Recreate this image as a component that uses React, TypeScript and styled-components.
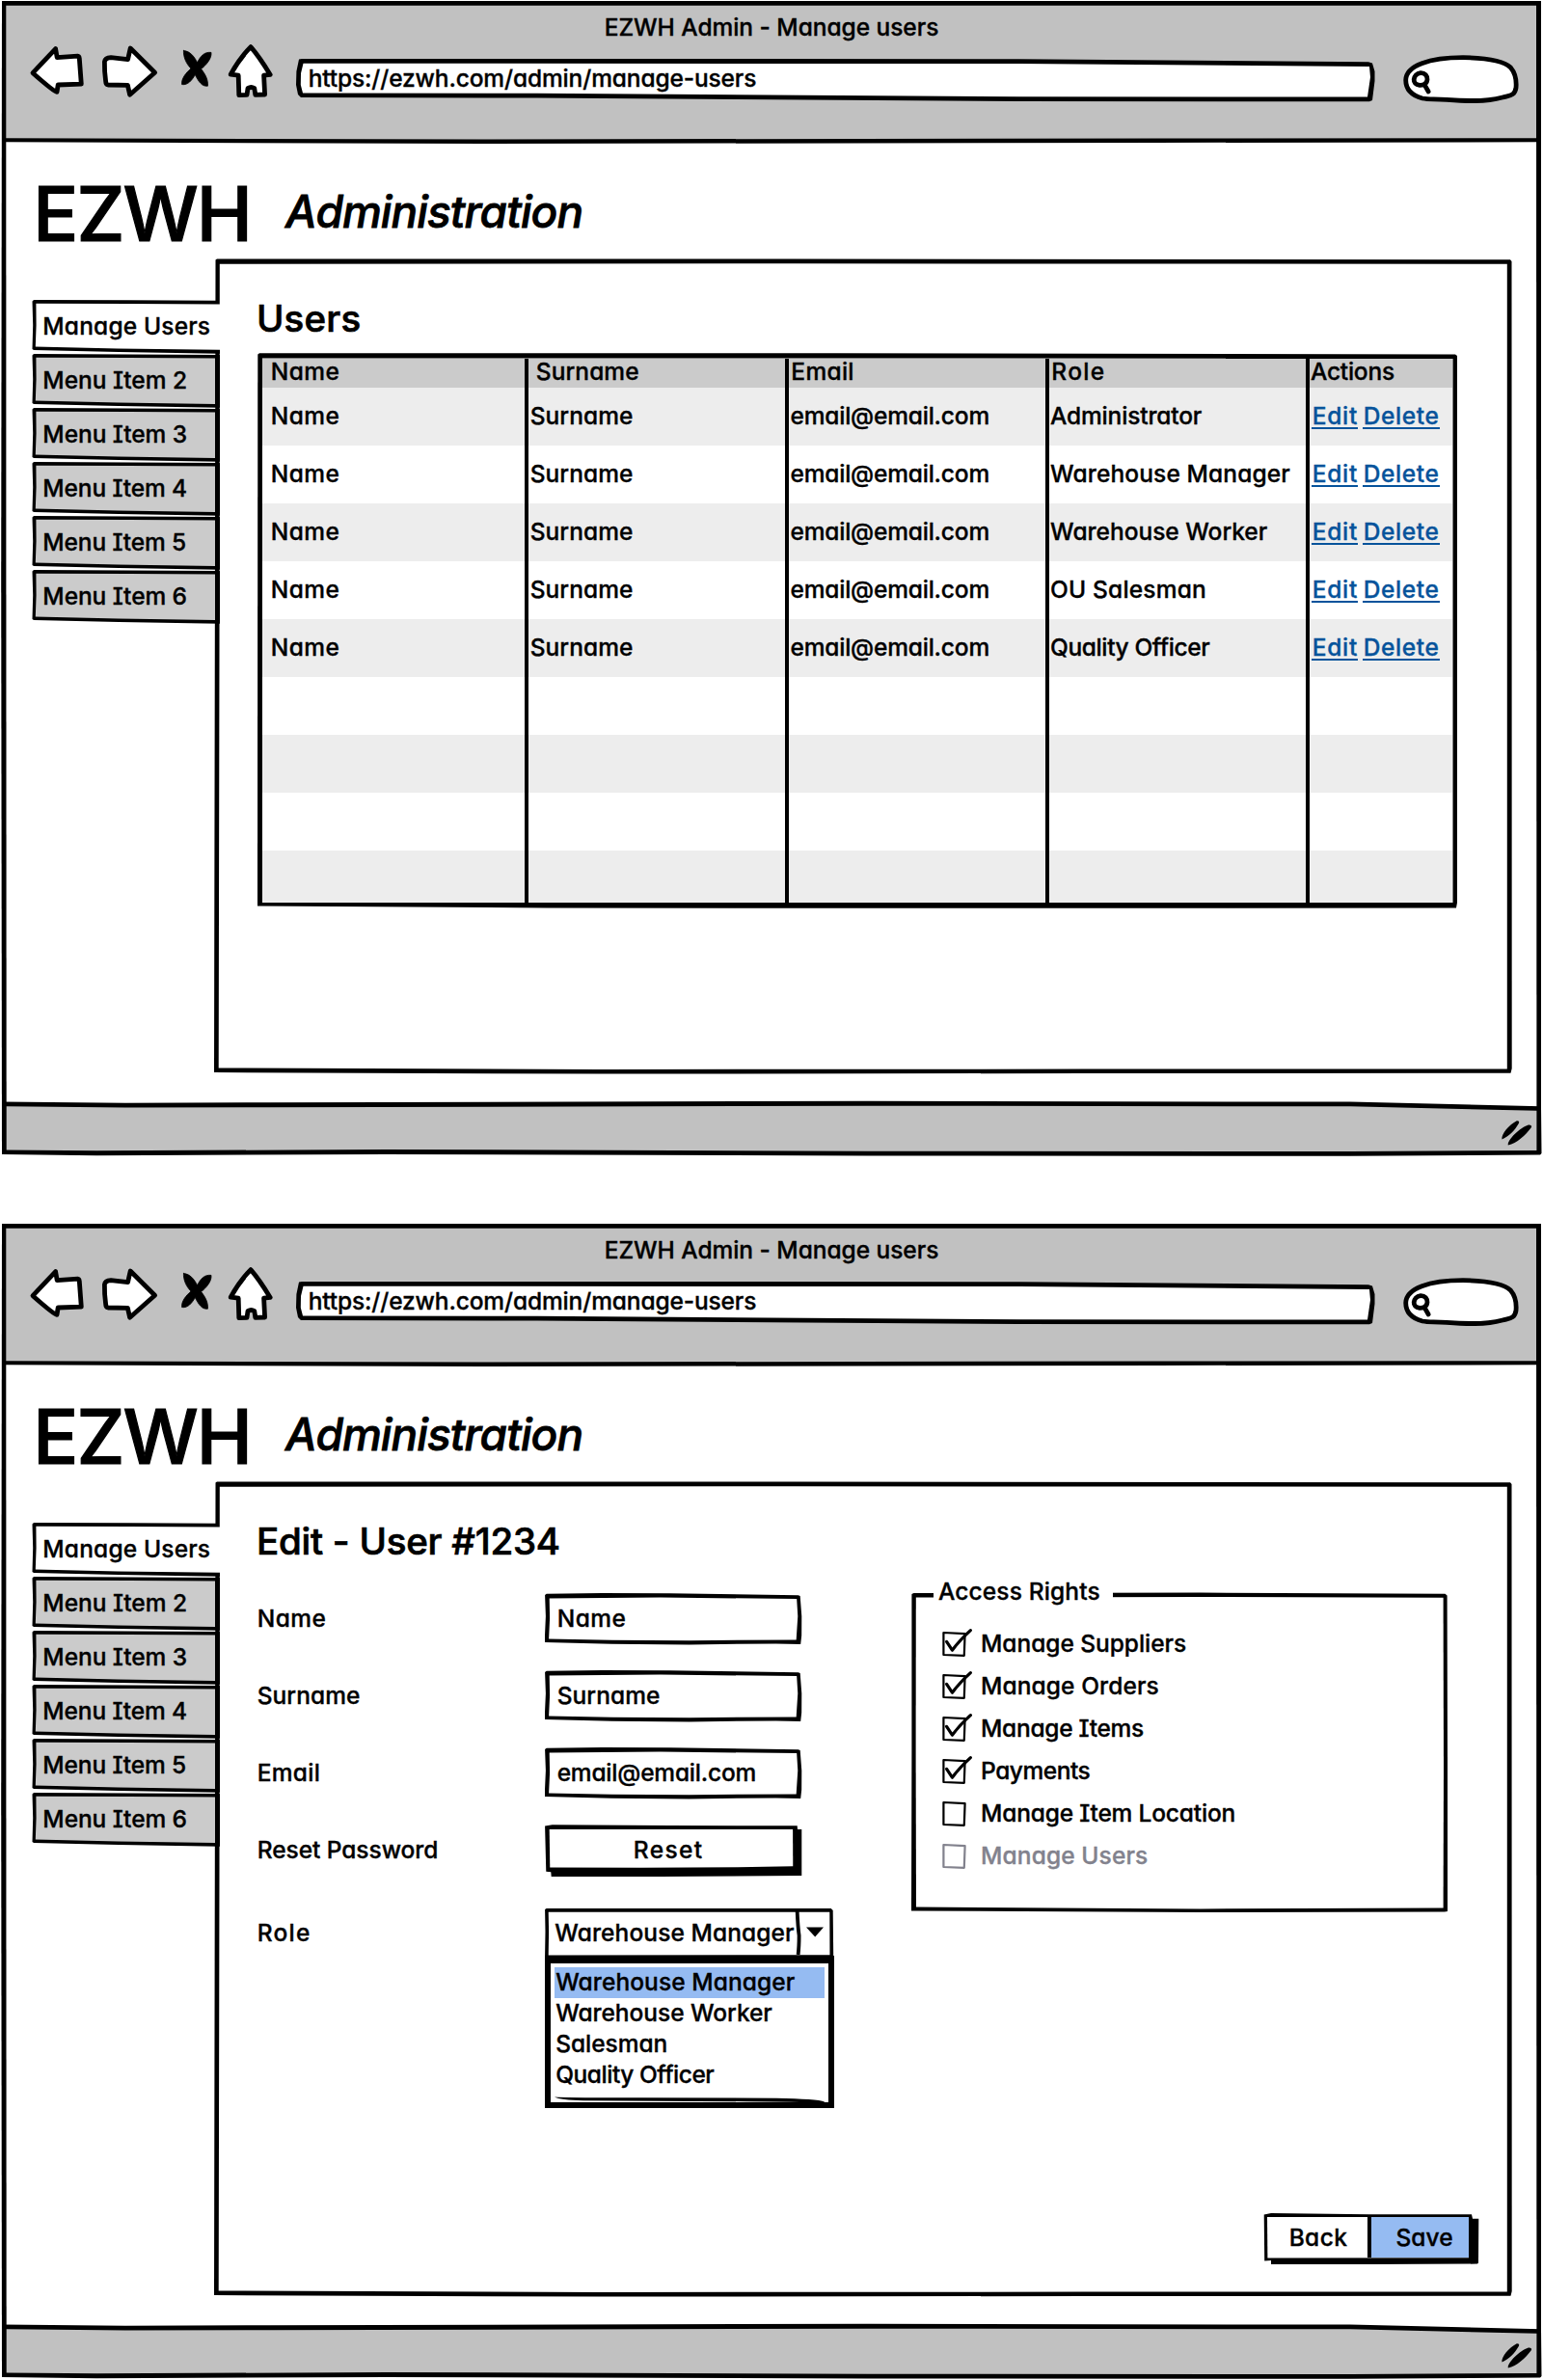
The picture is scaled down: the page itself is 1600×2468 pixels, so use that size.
import React, { useLayoutEffect, useRef, useState } from 'react';
import styled, { createGlobalStyle, css } from 'styled-components';

const INK = '#000';
const CHROME = '#c1c1c1';
const SHADE = '#cbcbcb';
const STRIPE = '#ededed';
const BLUE = '#95bbf2';
const LINK = '#06539b';
const MUTED = '#82828d';

type Pt = [number, number];

const poly = (pts: Pt[]) => `polygon(${pts.map(([x, y]) => `${x}px ${y}px`).join(', ')})`;

/* A hand-drawn box: an uneven ink shape with an uneven fill laid inside it. */
const sketch = (outer: Pt[], inner: Pt[], fill: string) => css`
  position: relative;
  isolation: isolate;

  &::before,
  &::after {
    content: '';
    position: absolute;
    inset: 0;
  }

  &::before {
    z-index: -2;
    background: ${INK};
    clip-path: ${poly(outer)};
  }

  &::after {
    z-index: -1;
    background: ${fill};
    clip-path: ${poly(inner)};
  }
`;

const GlobalStyle = createGlobalStyle`
  *, *::before, *::after { box-sizing: border-box; }

  body {
    margin: 0;
    background: #fff;
    color: ${INK};
    font-family: Inter, Lato, "Liberation Sans", sans-serif;
    font-size: 24.5px;
    font-weight: 500;
    font-feature-settings: "cv11", "cv08", "ss03";
    -webkit-font-smoothing: antialiased;
    -webkit-text-stroke: 0.35px currentColor;
  }
`;

/* ---------- fitted text ---------- */

const Run = styled.span`
  display: inline-block;
  margin-left: -0.055em;
  white-space: pre;
`;

function Fit({ w, children }: { w: number; children: string }) {
  const ref = useRef<HTMLSpanElement>(null);
  const [spacing, setSpacing] = useState(0);

  useLayoutEffect(() => {
    const el = ref.current;
    if (!el) return;
    const previous = el.style.letterSpacing;
    el.style.letterSpacing = '0px';
    const size = parseFloat(getComputedStyle(el).fontSize);
    const natural = el.getBoundingClientRect().width;
    el.style.letterSpacing = previous;
    setSpacing((w + size * 0.11 - natural) / (children.length - 1));
  }, [w, children]);

  return (
    <Run ref={ref} style={{ letterSpacing: spacing }}>
      {children}
    </Run>
  );
}

/* ---------- browser window ---------- */

const Page = styled.div`
  display: flex;
  flex-direction: column;
  gap: 68px;
  width: 1600px;
  height: 2468px;
  overflow: hidden;
`;

const Frame = styled.section`
  display: flex;
  flex-direction: column;
  flex: none;
  width: 1600px;
  height: 1200px;
  ${sketch(
    [[2, 1], [1598, 1], [1598, 1197], [2, 1197], [1.2, 600]],
    [[6.3, 5], [1593, 5], [1593.4, 1190], [6.7, 1190], [6.4, 600]],
    '#fff',
  )}
`;

const Toolbar = styled.header`
  flex: none;
  height: 149px;
  padding-top: 12px;
  ${sketch(
    [[2, 1], [1598, 1], [1598, 147.3], [1200, 148], [500, 149], [2, 147.3]],
    [[6.3, 5.8], [1593, 5.8], [1593, 143.2], [1200, 143.5], [500, 144.5], [6.3, 143.3]],
    CHROME,
  )}
`;

const WindowTitle = styled.div`
  height: 32px;
  padding-left: 628px;
  line-height: 32px;
`;

const NavRow = styled.div`
  display: flex;
  align-items: flex-start;
  gap: 14px;
  padding-left: 28px;
`;

const Glyph = styled.svg<{ $solid?: boolean }>`
  flex: none;
  display: block;
  fill: ${({ $solid }) => ($solid ? INK : '#fff')};
  stroke: ${INK};
  stroke-width: ${({ $solid }) => ($solid ? 0.8 : 4.8)};
  stroke-linejoin: round;
  stroke-linecap: round;
`;

const Address = styled.div`
  flex: none;
  width: 1119px;
  height: 46px;
  margin: 16px 0 0 7px;
  padding-left: 14px;
  line-height: 43px;
  ${sketch(
    [[3, 1.5], [6, 1], [750, 1.2], [1112, 4.2], [1116, 5.5], [1118.5, 14], [1118.5, 24], [1116, 44], [1113, 45.3], [750, 45], [250, 41.5], [5, 41], [2, 38], [0, 28], [0.4, 14]],
    [[7.5, 5.8], [750, 6], [1113, 9], [1114, 20], [1111, 40.6], [750, 40.3], [250, 36.8], [7, 36.4], [4.8, 28], [5, 16]],
    '#fff',
  )}
`;

const SearchPill = styled(Glyph)`
  margin: 10px 0 0 13px;
`;

const StatusBar = styled.footer`
  display: flex;
  justify-content: flex-end;
  flex: none;
  height: 60px;
  padding: 20px 9px 0 0;
  ${sketch(
    [[2, 2.6], [130, 3.8], [280, 3.2], [900, 1.8], [1400, 2.6], [1598, 7.2], [1598.5, 56], [1597, 57.6], [1400, 58.7], [900, 58.5], [400, 57], [100, 58.2], [2, 57]],
    [[6.7, 7.2], [130, 8.6], [280, 8.2], [900, 6.7], [1400, 7.3], [1593.4, 11.8], [1593.4, 53], [1400, 54], [900, 53.7], [400, 52], [100, 53.3], [6.7, 52.5]],
    CHROME,
  )}
`;

const Content = styled.div`
  flex: 1;
  display: flex;
  flex-direction: column;
  min-height: 0;
`;

const Masthead = styled.div`
  display: flex;
  flex: none;
  height: 119px;
  padding: 33px 0 0 38.6px;
  line-height: 80px;
`;

const Brand = styled.h1`
  width: 260px;
  margin: 0;
  font-size: 78px;
  font-weight: 500;
  line-height: 80px;
  -webkit-text-stroke-width: 1.2px;
`;

const Section = styled.h2`
  margin: -3px 0 0;
  font-size: 46px;
  font-style: italic;
  font-weight: 500;
  line-height: 80px;
  -webkit-text-stroke-width: 0.8px;
`;

const Columns = styled.div`
  display: flex;
  align-items: flex-start;
  padding-left: 33px;
`;

/* ---------- side tabs ---------- */

const Tabs = styled.nav`
  position: relative;
  z-index: 1;
  flex: none;
  width: 195px;
  margin-right: -6px;
  padding-top: 43px;
`;

const idleTab = sketch(
  [[0.5, 1.5], [2, 0], [100, 0.6], [195, 1], [195, 55.7], [90, 54], [2, 52], [0.5, 51], [1.2, 26]],
  [[4.4, 3.8], [100, 4], [190, 4.4], [190, 52], [90, 50.4], [3.8, 48.4], [4.6, 26]],
  SHADE,
);

const activeTab = sketch(
  [[0.5, 1.5], [2, 0], [100, 0.2], [193.5, 0.8], [193.5, 30], [195, 52], [195, 55.7], [90, 54], [2, 52], [0.5, 51], [1.2, 26]],
  [[4.4, 3.8], [100, 4], [195, 4.6], [195, 51.8], [90, 50.4], [3.8, 48.4], [4.6, 26]],
  '#fff',
);

const Tab = styled.a<{ $active: boolean }>`
  display: block;
  height: 56px;
  padding-left: 12.7px;
  line-height: 54px;
  ${({ $active }) => ($active ? activeTab : idleTab)}
`;

/* ---------- panel ---------- */

const Panel = styled.main`
  display: flex;
  flex-direction: column;
  width: 1346px;
  height: 846px;
  padding: 42px 34px 34px 46px;
  ${sketch(
    [[1.5, 1.5], [3, 0.6], [600, 0.5], [1344, 1.3], [1345.5, 3], [1345.7, 840], [1344.5, 844.8], [900, 845], [400, 845.6], [0, 844], [0.8, 400]],
    [[5.8, 5.7], [600, 5.3], [1340.8, 5.7], [1340.8, 840.5], [900, 840.6], [400, 840.9], [4.7, 839.4], [5.5, 400]],
    '#fff',
  )}
`;

const Heading = styled.h3`
  flex: none;
  height: 40px;
  margin: 0;
  font-size: 38.5px;
  font-weight: 500;
  line-height: 40px;
  -webkit-text-stroke-width: 0.7px;
`;

/* ---------- users table ---------- */

const Table = styled.div`
  width: 1244px;
  height: 576px;
  margin: 16px 0 0 -1px;
  padding: 5.5px 4.7px 6px 5px;
  ${sketch(
    [[0.3, 1.5], [2, 0.3], [600, 0.3], [1242, 1.5], [1244, 3], [1244, 570], [1243, 575.5], [700, 575.8], [300, 575.5], [0, 573.5]],
    [[5, 5.5], [1239.5, 5.7], [1239.5, 570], [5, 569.4]],
    '#fff',
  )}
`;

const Row = styled.div<{ $tone: string; $height: number }>`
  display: grid;
  grid-template-columns: 272px 270px 270px 270px 1fr;
  height: ${({ $height }) => $height}px;
  background: ${({ $tone }) => $tone};
`;

const Cell = styled.div<{ $pad: number; $line: number }>`
  padding-left: ${({ $pad }) => $pad}px;
  line-height: ${({ $line }) => $line}px;
  white-space: nowrap;

  & + & {
    border-left: 4px solid ${INK};
  }
`;

const Links = styled.div`
  display: flex;
  align-items: flex-start;
  gap: 5px;
  padding: 15px 0 0 1.5px;
  border-left: 4px solid ${INK};
  line-height: 28px;
`;

const ActionLink = styled.a<{ $width: number }>`
  width: ${({ $width }) => $width}px;
  height: 27.5px;
  padding-left: 2.5px;
  border-bottom: 2.4px solid ${LINK};
  color: ${LINK};
`;

/* ---------- edit form ---------- */

const FormArea = styled.div`
  display: flex;
  align-items: flex-start;
  gap: 80px;
  margin-top: 34px;
`;

const Fields = styled.div`
  flex: none;
  width: 597px;
`;

const Field = styled.div<{ $step: number }>`
  display: flex;
  align-items: flex-start;
  height: ${({ $step }) => $step}px;
  line-height: 52px;
`;

const FieldLabel = styled.label`
  flex: none;
  width: 296.7px;
`;

const Input = styled.div`
  width: 267px;
  height: 54px;
  padding-left: 14.3px;
  ${sketch(
    [[0.4, 2], [2, 0.8], [60, 0], [130, 0.2], [263, 2.2], [265, 3], [266.6, 24], [266.5, 44], [265.5, 53], [240, 52.4], [150, 53.4], [70, 52.8], [0, 51], [1.2, 24]],
    [[5, 5.4], [120, 4.6], [261.5, 6], [262.6, 24], [261, 48.4], [150, 49.2], [70, 48.8], [4.4, 47.6], [5.4, 26]],
    '#fff',
  )}
`;

const ResetButton = styled.div`
  width: 267px;
  height: 54px;
  padding-left: 93.5px;
  ${sketch(
    [[0.4, 1.5], [8, 0.2], [130, 1], [262, 1.3], [262.3, 5], [266.6, 5], [266.6, 53], [120, 54], [7, 54], [6.6, 49.2], [1.6, 48.8]],
    [[5, 5], [257.4, 5], [257.6, 43.2], [200, 44.2], [100, 44.8], [5.6, 44.6]],
    '#fff',
  )}
`;

const Combo = styled.div`
  width: 300px;
`;

const ComboBox = styled.div`
  display: flex;
  align-items: flex-start;
  justify-content: space-between;
  height: 50px;
  padding: 0 3px 0 12px;
  line-height: 52px;
  ${sketch(
    [[0.4, 2], [2, 1], [260, 1], [297, 1], [299, 3], [299.5, 50], [0.4, 50], [0.8, 25]],
    [[4, 4.8], [295.6, 4.8], [295.8, 49.2], [4, 49.4], [4.4, 25]],
    '#fff',
  )}
`;

const ComboArrow = styled.svg`
  display: block;
  width: 38px;
  height: 46px;
  margin-top: 3px;
`;

const Options = styled.div`
  height: 158px;
  padding: 4px 4px 0;
  border: 6px solid ${INK};
  border-top-width: 8px;
`;

const Option = styled.div<{ $selected: boolean }>`
  height: 32px;
  padding-left: 2.8px;
  line-height: 30px;
  background: ${({ $selected }) => ($selected ? BLUE : 'transparent')};
`;

const OptionsFoot = styled.svg`
  display: block;
  width: 280px;
  height: 8px;
  margin-top: 6px;
`;

const Rights = styled.div`
  flex: none;
  width: 556px;
  height: 349px;
  margin-top: -18px;
  ${sketch(
    [[0.4, 19], [2.5, 18], [300, 17.6], [553.5, 18.7], [555.6, 20.5], [556, 200], [556, 348], [553, 348.6], [300, 349], [0, 347.5], [0.4, 180]],
    [[4.8, 22.5], [300, 22], [551.6, 22.8], [552, 200], [551.6, 344.6], [300, 345.4], [5, 343.6], [4.6, 180]],
    '#fff',
  )}
`;

const Legend = styled.div`
  width: 186px;
  height: 34px;
  margin-left: 22.8px;
  padding-left: 6.5px;
  background: #fff;
  line-height: 33px;
`;

const CheckList = styled.div`
  padding: 13.7px 0 0 30px;
`;

const CheckRow = styled.div<{ $off: boolean }>`
  display: flex;
  align-items: center;
  gap: 9.4px;
  height: 44px;
  line-height: 44px;
  color: ${({ $off }) => ($off ? MUTED : INK)};
`;

const CheckBox = styled.svg`
  flex: none;
  display: block;
  fill: none;
  stroke: currentColor;
  stroke-width: 2.2;
  stroke-linejoin: round;
  stroke-linecap: round;
`;

const ButtonGroup = styled.div`
  display: flex;
  flex: none;
  align-self: flex-end;
  width: 224px;
  height: 53px;
  margin-top: auto;
  padding: 4px 11px 7px 4px;
  ${sketch(
    [[0.7, 1.4], [8, 0], [110, 1.2], [216, 1.2], [217, 5.7], [223.3, 5.7], [223, 51.5], [222, 52.6], [8, 53.4], [8, 49], [1.2, 49.4]],
    [[4, 4], [213, 4], [213, 46.2], [4.4, 46.4]],
    '#fff',
  )}
`;

const GroupButton = styled.div<{ $width: number; $pad: number; $primary?: boolean }>`
  width: ${({ $width }) => $width}px;
  padding-left: ${({ $pad }) => $pad}px;
  line-height: 43px;
  background: ${({ $primary }) => ($primary ? BLUE : 'transparent')};

  & + & {
    border-left: 4px solid ${INK};
  }
`;

/* ---------- parts ---------- */

const TABS: [string, number][] = [
  ['Manage Users', 171],
  ['Menu Item 2', 147],
  ['Menu Item 3', 147],
  ['Menu Item 4', 147],
  ['Menu Item 5', 146],
  ['Menu Item 6', 147],
];

function BrowserWindow({ children }: { children: React.ReactNode }) {
  return (
    <Frame>
      <Toolbar>
        <WindowTitle>
          <Fit w={344}>EZWH Admin - Manage users</Fit>
        </WindowTitle>
        <NavRow>
          <Glyph width="62" height="58" viewBox="28 44 62 58">
            <path d="M34 75.7L57.6 50.6L59.2 59.6L80.5 58.2Q82 58.4 82.3 60.5L84.3 87.2L60.2 88L59 95.4Q56 95 34 75.7Z" />
          </Glyph>
          <Glyph width="66" height="58" viewBox="104 44 66 58">
            <path d="M108.4 64Q109 60 115 59.6L132.6 61.6L135.2 50L160.6 75.3L134.6 98.2L132.4 88.4L112 88Q109.8 87.6 109.6 84Q108.2 74 108.4 64Z" />
          </Glyph>
          <Glyph $solid width="36" height="58" viewBox="184 44 36 58">
            <path d="M190.4 52.6C197 53 201 58 204.6 64.8C208 58 212 53.6 219 54.4C219.6 61 214 67 208.6 71.6C213 77 216 83 215.4 89.2C209 90 205.6 84 202.4 77.6C199 83 195 88.6 188.6 87.6C188 81 193 75.6 198 71C193 66 190 59 190.4 52.6Z" />
          </Glyph>
          <Glyph width="52" height="58" viewBox="234 44 52 58">
            <path d="M260 48.6Q269 59 280.2 77.4L273.6 78.2L274.6 98L264.8 98.4L263.8 91.6Q260.4 89.4 257 91.6L256 98.4L247.8 98.6L247.2 78.2L239.2 77.2Q248 61 260 48.6Z" />
          </Glyph>
          <Address>
            <Fit w={462}>https://ezwh.com/admin/manage-users</Fit>
          </Address>
          <SearchPill width="124" height="56" viewBox="1453 54 124 56">
            <path d="M1457.7 83C1458 68 1482 59.6 1517 59.6C1545 60 1560 63.4 1566.4 70C1571.4 76 1572.6 84 1572 91C1570.6 99.4 1566 98.8 1558 101C1540 106 1520 105 1500 103.4C1487 102.4 1482 103.4 1475 102C1464 99 1457.7 93 1457.7 83Z" />
            <path d="M1473 75.6C1477.6 75.4 1480.4 79 1480 82.6C1479.6 87 1477 88.6 1472 88.4C1468 88 1466 85.6 1466.2 82.4C1466.6 79 1469 76 1473 75.6ZM1477.4 88.4L1481.2 95" />
          </SearchPill>
        </NavRow>
      </Toolbar>
      <Content>
        <Masthead>
          <Brand>
            <Fit w={219}>EZWH</Fit>
          </Brand>
          <Section>
            <Fit w={304}>Administration</Fit>
          </Section>
        </Masthead>
        <Columns>
          <Tabs>
            {TABS.map(([name, w], i) => (
              <Tab key={name} $active={i === 0}>
                <Fit w={w}>{name}</Fit>
              </Tab>
            ))}
          </Tabs>
          <Panel>{children}</Panel>
        </Columns>
      </Content>
      <StatusBar>
        <svg width="36" height="30" viewBox="1555 1160 36 30">
          <path d="M1557.4 1181.4C1556.6 1176 1565 1166 1572.4 1162.4C1575 1162 1575.8 1163.4 1574.8 1165C1571 1172 1564 1179 1557.4 1181.4Z" />
          <path d="M1563.8 1187.4C1563 1182 1576 1169.6 1584.8 1166.6C1588 1166.6 1588.8 1168 1587.6 1169.4C1582 1177 1573 1185.4 1563.8 1187.4Z" />
        </svg>
      </StatusBar>
    </Frame>
  );
}

const HEADERS: [string, number, number][] = [
  ['Name', 68.5, 10],
  ['Surname', 104, 9.2],
  ['Email', 62.5, 3.7],
  ['Role', 52, 3.7],
  ['Actions', 84.5, 2.3],
];

const ROLES: [string, number][] = [
  ['Administrator', 154.5],
  ['Warehouse Manager', 246],
  ['Warehouse Worker', 222.5],
  ['OU Salesman', 159],
  ['Quality Officer', 163],
];

const EMPTY_ROWS = [60, 60, 60, 54];

function UsersScreen() {
  return (
    <>
      <Heading>
        <Fit w={104}>Users</Fit>
      </Heading>
      <Table>
        <Row $tone={SHADE} $height={30.5}>
          {HEADERS.map(([name, w, pad]) => (
            <Cell key={name} $pad={pad} $line={26.5}>
              <Fit w={w}>{name}</Fit>
            </Cell>
          ))}
        </Row>
        {ROLES.map(([role, w], i) => (
          <Row key={role} $tone={i % 2 ? '#fff' : STRIPE} $height={60}>
            <Cell $pad={10} $line={59}>
              <Fit w={68.5}>Name</Fit>
            </Cell>
            <Cell $pad={3} $line={59}>
              <Fit w={104}>Surname</Fit>
            </Cell>
            <Cell $pad={2.8} $line={59}>
              <Fit w={204}>email@email.com</Fit>
            </Cell>
            <Cell $pad={2.4} $line={59}>
              <Fit w={w}>{role}</Fit>
            </Cell>
            <Links>
              <ActionLink $width={48}>
                <Fit w={44}>Edit</Fit>
              </ActionLink>
              <ActionLink $width={80}>
                <Fit w={75.5}>Delete</Fit>
              </ActionLink>
            </Links>
          </Row>
        ))}
        {EMPTY_ROWS.map((height, i) => (
          <Row key={i} $tone={i % 2 ? STRIPE : '#fff'} $height={height}>
            {HEADERS.map(([name]) => (
              <Cell key={name} $pad={0} $line={20} />
            ))}
          </Row>
        ))}
      </Table>
    </>
  );
}

const RIGHTS: [string, number, boolean][] = [
  ['Manage Suppliers', 210.5, true],
  ['Manage Orders', 182, true],
  ['Manage Items', 166.5, true],
  ['Payments', 111, true],
  ['Manage Item Location', 261.5, false],
  ['Manage Users', 170.5, false],
];

const OPTIONS: [string, number][] = [
  ['Warehouse Manager', 245.5],
  ['Warehouse Worker', 222],
  ['Salesman', 113.5],
  ['Quality Officer', 162],
];

function EditScreen() {
  return (
    <>
      <Heading>
        <Fit w={311}>Edit - User #1234</Fit>
      </Heading>
      <FormArea>
        <Fields>
          <Field $step={80}>
            <FieldLabel>
              <Fit w={68.5}>Name</Fit>
            </FieldLabel>
            <Input>
              <Fit w={68.5}>Name</Fit>
            </Input>
          </Field>
          <Field $step={80}>
            <FieldLabel>
              <Fit w={104}>Surname</Fit>
            </FieldLabel>
            <Input>
              <Fit w={104}>Surname</Fit>
            </Input>
          </Field>
          <Field $step={80}>
            <FieldLabel>
              <Fit w={62.5}>Email</Fit>
            </FieldLabel>
            <Input>
              <Fit w={204}>email@email.com</Fit>
            </Input>
          </Field>
          <Field $step={86}>
            <FieldLabel>
              <Fit w={185}>Reset Password</Fit>
            </FieldLabel>
            <ResetButton>
              <Fit w={68.5}>Reset</Fit>
            </ResetButton>
          </Field>
          <Field $step={208}>
            <FieldLabel>
              <Fit w={52}>Role</Fit>
            </FieldLabel>
            <Combo>
              <ComboBox>
                <Fit w={245.5}>Warehouse Manager</Fit>
                <ComboArrow viewBox="0 0 38 46">
                  <path d="M2.6 0Q3.4 18 4.6 26Q4.6 38 3.6 46" fill="none" stroke={INK} strokeWidth="3.8" />
                  <path d="M12 17.6L30 17.4L21.2 27.6Z" fill={INK} />
                </ComboArrow>
              </ComboBox>
              <Options>
                {OPTIONS.map(([name, w], i) => (
                  <Option key={name} $selected={i === 0}>
                    <Fit w={w}>{name}</Fit>
                  </Option>
                ))}
                <OptionsFoot viewBox="0 0 280 8">
                  <path d="M0 0.4Q14 1.4 90 1.2L230 1.8Q272 2.6 280 5.4L279 6.4Q250 5.6 200 5.2L30 4.2Q6 3.6 0 0.4Z" />
                </OptionsFoot>
              </Options>
            </Combo>
          </Field>
        </Fields>
        <Rights>
          <Legend>
            <Fit w={165}>Access Rights</Fit>
          </Legend>
          <CheckList>
            {RIGHTS.map(([name, w, checked]) => (
              <CheckRow key={name} $off={name === 'Manage Users'}>
                <CheckBox width="34" height="32" viewBox="0 0 34 32">
                  <path d="M3.4 5L25.6 6.2L24.8 28.8L3.4 28Z" />
                  {checked && <path d="M6.6 14.4Q9 18 12.4 23.2Q20 13 31.4 2.6" strokeWidth="3.2" />}
                </CheckBox>
                <Fit w={w}>{name}</Fit>
              </CheckRow>
            ))}
          </CheckList>
        </Rights>
      </FormArea>
      <ButtonGroup>
        <GroupButton $width={104.3} $pad={24}>
          <Fit w={57.5}>Back</Fit>
        </GroupButton>
        <GroupButton $width={104.7} $pad={26.5} $primary>
          <Fit w={56.5}>Save</Fit>
        </GroupButton>
      </ButtonGroup>
    </>
  );
}

export default function App() {
  return (
    <>
      <GlobalStyle />
      <Page>
        <BrowserWindow>
          <UsersScreen />
        </BrowserWindow>
        <BrowserWindow>
          <EditScreen />
        </BrowserWindow>
      </Page>
    </>
  );
}
